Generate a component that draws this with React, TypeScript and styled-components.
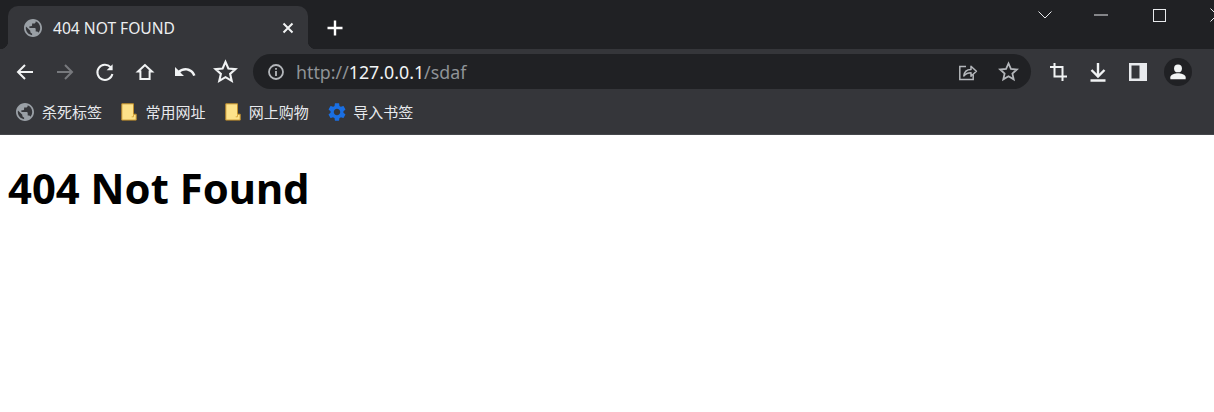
import styled, { createGlobalStyle } from 'styled-components';

const GlobalStyle = createGlobalStyle`
  html, body {
    margin: 0;
    padding: 0;
    background: #fff;
  }
`;

const Page = styled.div`
  width: 1214px;
  height: 412px;
  overflow: hidden;
  display: flex;
  flex-direction: column;
  font-family: 'Noto Sans', 'Noto Sans CJK SC', sans-serif;
`;

const TitleBar = styled.div`
  height: 49px;
  flex-shrink: 0;
  background: #202124;
  display: flex;
  align-items: flex-end;
  padding-left: 8px;
`;

const Tab = styled.div`
  position: relative;
  width: 300px;
  height: 43px;
  box-sizing: border-box;
  background: #35363a;
  border-radius: 10px 10px 0 0;
  display: flex;
  align-items: center;
  padding: 0 14px 0 16px;
  color: #e8eaed;

  &::before,
  &::after {
    content: '';
    position: absolute;
    bottom: 0;
    width: 8px;
    height: 8px;
  }
  &::before {
    left: -8px;
    background: radial-gradient(circle at 0 0, transparent 8px, #35363a 8.5px);
  }
  &::after {
    right: -8px;
    background: radial-gradient(circle at 100% 0, transparent 8px, #35363a 8.5px);
  }
`;

const TabTitle = styled.span`
  flex: 1;
  margin-left: 11px;
  font-size: 15.6px;
  color: #eceef0;
  white-space: nowrap;
`;

const NewTab = styled.div`
  width: 24px;
  height: 24px;
  margin: 0 0 9px 15px;
  color: #fff;
`;

const WindowControls = styled.div`
  margin-left: auto;
  margin-right: -32px;
  align-self: flex-start;
  display: flex;
`;

const WindowButton = styled.div<{ $width?: number }>`
  width: ${(p) => p.$width ?? 58}px;
  height: 30px;
  display: flex;
  align-items: center;
  justify-content: center;
  color: #e8eaed;
`;

const Toolbar = styled.div`
  height: 48px;
  flex-shrink: 0;
  box-sizing: border-box;
  background: #35363a;
  display: flex;
  align-items: center;
  padding: 0 22px 3px 5px;
`;

const ToolButton = styled.div<{ $dim?: boolean }>`
  width: 40px;
  height: 36px;
  flex-shrink: 0;
  display: flex;
  align-items: center;
  justify-content: center;
  color: ${(p) => (p.$dim ? '#77797d' : '#f1f3f4')};
`;

const Omnibox = styled.div`
  flex: 1;
  height: 35px;
  margin: 0 7px 0 8px;
  border-radius: 18px;
  background: #202124;
  display: flex;
  align-items: center;
  padding: 0 2px 0 14px;
`;

const Url = styled.div`
  flex: 1;
  margin-left: 11px;
  font-size: 17.8px;
  color: #8f9397;
  white-space: nowrap;
`;

const Host = styled.span`
  color: #f1f3f4;
`;

const OmniButton = styled.div`
  width: 41px;
  height: 30px;
  display: flex;
  align-items: center;
  justify-content: center;
  color: #b4b7bb;
`;

const Avatar = styled.div`
  width: 28px;
  height: 28px;
  border-radius: 50%;
  background: #202124;
  margin-left: 6px;
  display: flex;
  align-items: center;
  justify-content: center;
  color: #f1f3f4;
`;

const BookmarkBar = styled.div`
  height: 38px;
  flex-shrink: 0;
  box-sizing: border-box;
  background: #35363a;
  border-bottom: 1px solid #45474b;
  display: flex;
  align-items: center;
  padding: 0 0 8px 16px;
  gap: 19.4px;
`;

const Bookmark = styled.div<{ $gap?: number }>`
  display: flex;
  align-items: center;
  gap: ${(p) => p.$gap ?? 8}px;
  font-family: 'Noto Sans CJK SC', sans-serif;
  font-size: 15px;
  color: #e8eaed;
  white-space: nowrap;
`;

const Content = styled.main`
  flex: 1;
  background: #fff;
  padding: 25px 8px 0;
`;

const Heading = styled.h1`
  margin: 0;
  font-size: 41.8px;
  line-height: 56px;
  font-weight: 700;
  color: #000;
`;

const Globe = ({ size, color }: { size: number; color: string }) => (
  <svg width={size} height={size} viewBox="2 2 20 20" fill={color}>
    <path d="M12 2C6.48 2 2 6.48 2 12s4.48 10 10 10 10-4.48 10-10S17.52 2 12 2zm-1 17.93c-3.95-.49-7-3.85-7-7.93 0-.62.08-1.21.21-1.79L9 15v1c0 1.1.9 2 2 2v1.93zm6.9-2.54c-.26-.81-1-1.39-1.9-1.39h-1v-3c0-.55-.45-1-1-1H8v-2h2c.55 0 1-.45 1-1V7h2c1.1 0 2-.9 2-2v-.41c2.93 1.19 5 4.06 5 7.41 0 2.08-.8 3.97-2.1 5.39z" />
  </svg>
);

const Star = ({ size }: { size: number }) => (
  <svg width={size} height={size} viewBox="0 0 24 24" fill="none" stroke="currentColor" strokeWidth="2" strokeLinejoin="miter">
    <path d="M12 2.8l2.75 6.3 6.85.63-5.18 4.53 1.55 6.7L12 17.4l-5.97 3.56 1.55-6.7L2.4 9.73l6.85-.63z" />
  </svg>
);

const Folder = () => (
  <svg width="16" height="18" viewBox="0 0 16 18">
    <path d="M.8.8h11.7v10.4h2.7v5.9H.8z" fill="#fde28a" stroke="#c08f2c" strokeWidth="1" />
    <path d="M12.5 11.2v2.6h-1.8" fill="none" stroke="#d9a93f" strokeWidth="1" />
  </svg>
);

const Gear = () => (
  <svg width="18" height="18" viewBox="2 2 20 20" fill="#1a6fe3">
    <path d="M19.14 12.94c.04-.3.06-.61.06-.94 0-.32-.02-.64-.07-.94l2.03-1.58c.18-.14.23-.41.12-.61l-1.92-3.32c-.12-.22-.37-.29-.59-.22l-2.39.96c-.5-.38-1.03-.7-1.62-.94l-.36-2.54c-.04-.24-.24-.41-.48-.41h-3.84c-.24 0-.43.17-.47.41l-.36 2.54c-.59.24-1.13.57-1.62.94l-2.39-.96c-.22-.08-.47 0-.59.22L2.74 8.87c-.12.21-.08.47.12.61l2.03 1.58c-.05.3-.09.63-.09.94s.02.64.07.94l-2.03 1.58c-.18.14-.23.41-.12.61l1.92 3.32c.12.22.37.29.59.22l2.39-.96c.5.38 1.03.7 1.62.94l.36 2.54c.05.24.24.41.48.41h3.84c.24 0 .44-.17.47-.41l.36-2.54c.59-.24 1.13-.56 1.62-.94l2.39.96c.22.08.47 0 .59-.22l1.92-3.32c.12-.22.07-.47-.12-.61l-2.01-1.58zM12 15.6c-1.98 0-3.6-1.62-3.6-3.6s1.62-3.6 3.6-3.6 3.6 1.62 3.6 3.6-1.62 3.6-3.6 3.6z" />
  </svg>
);

const App = () => {
  return (
    <Page>
      <GlobalStyle />
      <TitleBar>
        <Tab>
          <Globe size={18} color="#9aa0a6" />
          <TabTitle>404 NOT FOUND</TabTitle>
          <svg width="12" height="12" viewBox="0 0 12 12" stroke="#f1f3f4" strokeWidth="2">
            <path d="M1.5 1.5l9 9M10.5 1.5l-9 9" />
          </svg>
        </Tab>
        <NewTab>
          <svg width="24" height="24" viewBox="0 0 24 24" stroke="currentColor" strokeWidth="2.4">
            <path d="M12 4.5v15M4.5 12h15" />
          </svg>
        </NewTab>
        <WindowControls>
          <WindowButton $width={54}>
            <svg width="14" height="8" viewBox="0 0 14 8" fill="none" stroke="currentColor">
              <path d="M.5.5L7 7 13.5.5" />
            </svg>
          </WindowButton>
          <WindowButton>
            <svg width="14" height="2" viewBox="0 0 14 2" stroke="currentColor">
              <path d="M0 1h14" />
            </svg>
          </WindowButton>
          <WindowButton>
            <svg width="13" height="13" viewBox="0 0 13 13" fill="none" stroke="currentColor">
              <rect x=".5" y=".5" width="12" height="12" />
            </svg>
          </WindowButton>
          <WindowButton>
            <svg width="14" height="14" viewBox="0 0 14 14" stroke="currentColor">
              <path d="M.5.5l13 13M13.5.5l-13 13" />
            </svg>
          </WindowButton>
        </WindowControls>
      </TitleBar>

      <Toolbar>
        <ToolButton>
          <svg width="20" height="20" viewBox="0 0 20 20" fill="none" stroke="currentColor" strokeWidth="2">
            <path d="M18 10H3M10 3l-7 7 7 7" />
          </svg>
        </ToolButton>
        <ToolButton $dim>
          <svg width="20" height="20" viewBox="0 0 20 20" fill="none" stroke="currentColor" strokeWidth="2">
            <path d="M2 10h15M10 3l7 7-7 7" />
          </svg>
        </ToolButton>
        <ToolButton>
          <svg width="20" height="20" viewBox="0 0 20 20" fill="none" stroke="currentColor" strokeWidth="2">
            <path d="M15.6 5.2A7.6 7.6 0 1 0 17.4 12" />
            <path d="M17.6 2.2v6h-6z" fill="currentColor" stroke="none" />
          </svg>
        </ToolButton>
        <ToolButton>
          <svg width="20" height="20" viewBox="0 0 20 20" fill="none" stroke="currentColor" strokeWidth="2">
            <path d="M10 3L3 9.6h2.4V17h9.2V9.6H17z" strokeLinejoin="miter" />
          </svg>
        </ToolButton>
        <ToolButton>
          <svg width="24" height="24" viewBox="0 0 24 24" fill="currentColor">
            <path d="M12.5 8c-2.65 0-5.05.99-6.9 2.6L2 7v9h9l-3.62-3.62c1.39-1.16 3.16-1.88 5.12-1.88 3.54 0 6.55 2.31 7.6 5.5l2.37-.78C21.08 11.03 17.15 8 12.5 8z" />
          </svg>
        </ToolButton>
        <ToolButton>
          <Star size={25} />
        </ToolButton>
        <Omnibox>
          <svg width="18" height="18" viewBox="0 0 18 18" fill="none" stroke="#b4b7bb" strokeWidth="1.8">
            <circle cx="9" cy="9" r="7" />
            <path d="M9 8v5M9 5v1.8" />
          </svg>
          <Url>
            http://<Host>127.0.0.1</Host>/sdaf
          </Url>
          <OmniButton>
            <svg width="20" height="20" viewBox="0 0 20 20" fill="none" stroke="currentColor" strokeWidth="1.5">
              <path d="M8 4.5H1.8v13h13.4v-5" />
              <path d="M5.8 14c.4-4 3-6.6 7.2-6.6V4.2l5.4 5-5.4 5v-3.4c-3 0-5.4 1-7.2 3.2z" strokeLinejoin="round" />
            </svg>
          </OmniButton>
          <OmniButton>
            <Star size={21} />
          </OmniButton>
        </Omnibox>
        <ToolButton>
          <svg width="17" height="18" viewBox="0 0 17 18" fill="none" stroke="currentColor" strokeWidth="2">
            <path d="M0 4h12.5v11M4.5 0v13.5H17M12.5 15v3" />
          </svg>
        </ToolButton>
        <ToolButton>
          <svg width="20" height="20" viewBox="0 0 20 20" fill="none" stroke="currentColor" strokeWidth="2.4">
            <path d="M10 1v13M3.5 8l6.5 6.5L16.5 8M2.5 18.5h15" />
          </svg>
        </ToolButton>
        <ToolButton>
          <svg width="18" height="18" viewBox="0 0 18 18" fill="#e8eaed">
            <path fillRule="evenodd" d="M0 0h18v18H0zM2.5 2.5v13h8v-13z" />
          </svg>
        </ToolButton>
        <Avatar>
          <svg width="18" height="18" viewBox="0 0 20 20" fill="currentColor">
            <circle cx="10" cy="6" r="4.4" />
            <path d="M1.5 18v-2.2c0-3 5.5-4.4 8.5-4.4s8.5 1.4 8.5 4.4V18z" />
          </svg>
        </Avatar>
      </Toolbar>

      <BookmarkBar>
        <Bookmark>
          <Globe size={18} color="#9aa0a6" />
          杀死标签
        </Bookmark>
        <Bookmark>
          <Folder />
          常用网址
        </Bookmark>
        <Bookmark>
          <Folder />
          网上购物
        </Bookmark>
        <Bookmark $gap={7}>
          <Gear />
          导入书签
        </Bookmark>
      </BookmarkBar>

      <Content>
        <Heading>404 Not Found</Heading>
      </Content>
    </Page>
  );
};

export default App;
